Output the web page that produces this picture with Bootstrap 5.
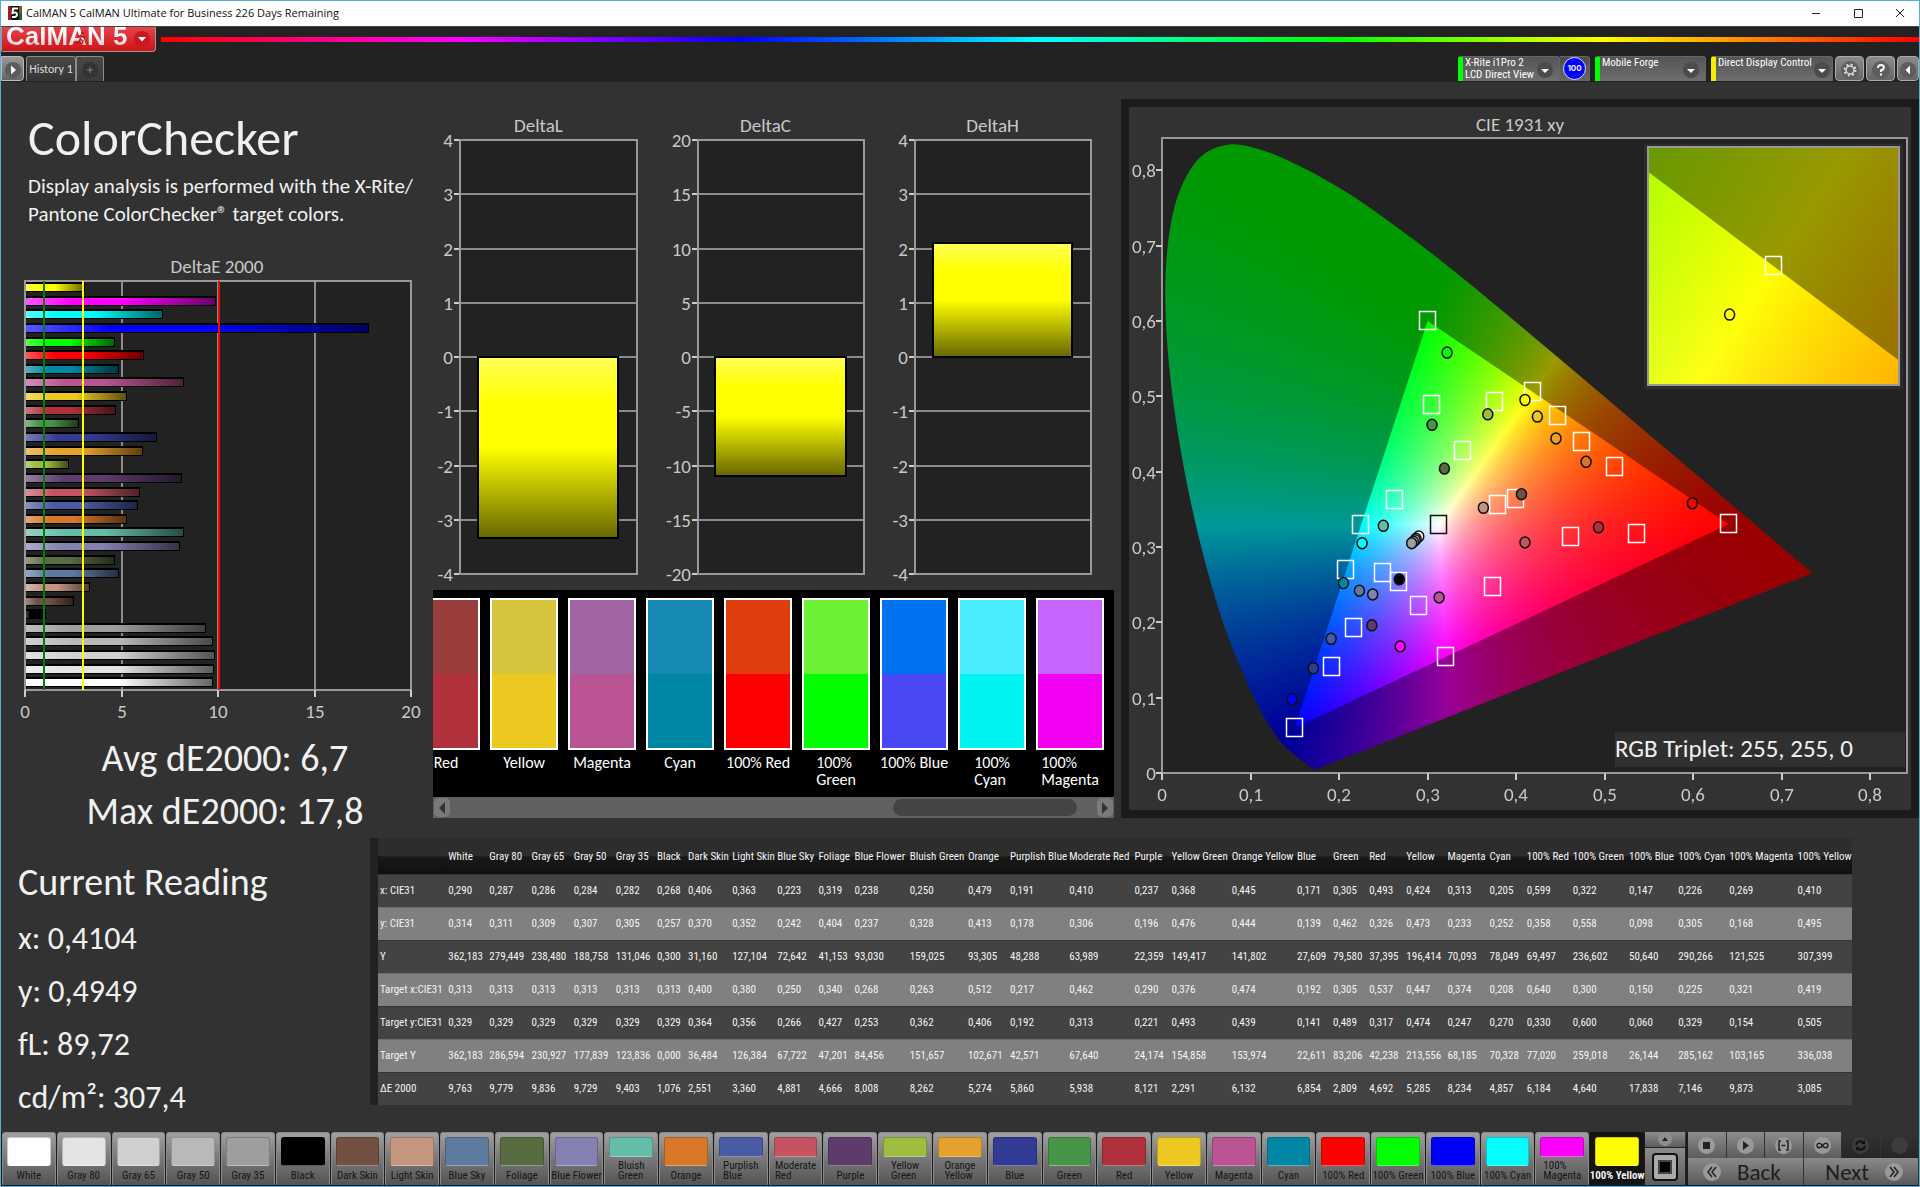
<!DOCTYPE html>
<html lang="en">
<head>
<meta charset="utf-8">
<meta name="viewport" content="width=device-width, initial-scale=1">
<title>CalMAN 5 CalMAN Ultimate for Business</title>
<link rel="stylesheet" href="https://cdn.jsdelivr.net/npm/bootstrap@5.3.0/dist/css/bootstrap.min.css">
<style>
  :root { --ui: Carlito, Calibri, "Open Sans", sans-serif; --tight: "Roboto Condensed", Roboto, sans-serif; }
  body { font-family: var(--ui); background: #323232; color: #f0f0f0; border: 1px solid #5aabdc; overflow-x: hidden; }
  button { font-family: inherit; }
  .titlebar { height: 25px; background: #fff; color: #111; font: 11px/22px "Open Sans", sans-serif; padding: 0 0 2px 7px; gap: 4px; }
  .titlebar .winbtn { width: 38px; height: 22px; border: 0; background: none; padding: 0; line-height: 0; }
  .shell { background: #222; height: 56px; border-top: 1px solid #444; }
  .logo-btn { width: 155px; height: 25px; border: 1px solid #999; border-top: 0; border-radius: 0 0 4px 2px; background: linear-gradient(#e8434a, #cf1218); padding: 0 4px 0 4px; overflow: hidden; position: relative; }
  .logo-btn span { font: bold 26px/18px "Liberation Sans", sans-serif; height: 22px; background: linear-gradient(#fff 30%, #c3c3c8); -webkit-background-clip: text; background-clip: text; color: transparent; }
  .logo-btn .runner { position: absolute; left: 73px; top: 4px; }
  .rainbow { height: 5px; margin: 0 0 1px 5px; background: linear-gradient(90deg, #f00, #f0f 17%, #00f 33%, #0ff 50%, #0f0 67%, #ff0 82%, #f00); }
  .tabrow { height: 25px; }
  .chip { border: 1px solid #8d8d8d; border-bottom: 0; border-radius: 3px 3px 0 0; background: linear-gradient(#5a5a5a, #3a3a3a); color: #ddd; height: 25px; padding: 0; }
  .play { width: 23px; border-radius: 0 4px 4px 0; border: 1px solid #bbb; background: linear-gradient(#999, #666); }
  .hist { width: 50px; font-size: 12px; margin-left: 2px; background: linear-gradient(#484848, #343434); }
  .plus { width: 28px; border-radius: 0 3px 0 0; background: linear-gradient(#484848, #3a3a3a); }
  .device { border-color: #666; background: linear-gradient(#555, #6e6e6e); border-left: 5px solid #0f0; font: 11px/12px var(--tight); color: #fff; text-align: left; padding: 0 6px 0 2px; white-space: nowrap; }
  .device.y { border-left-color: #f5ee00; padding-right: 2px; }
  .tool { width: 29px; border: 1px solid #aaa; border-radius: 4px; background: linear-gradient(#8b8b8b, #666); color: #fff; margin-right: 2px; }
  .w100 { width: 23px; height: 23px; border-radius: 50%; background: #00f; border: 1px solid #dde; font: bold 8px/21px Inter, sans-serif; text-align: center; }
  .meter { width: 30px; border: 1px solid #666; border-left: 0; border-radius: 0 3px 0 0; background: linear-gradient(#4c4c4c, #666); height: 25px; }
  .colA { width: 22%; padding-left: 2px; }
  .colB { width: 36.4%; }
  .deltas { padding: 32px 15px 0 2px; }
  .deltas svg { overflow: visible; }
  .intro { padding-left: 25px; }
  .intro h1 { font-size: 50px; line-height: 60px; margin: 26px 0 4px; }
  .intro p { font-size: 21px; line-height: 28px; margin: 0 0 27px; white-space: nowrap; }
  .fig-title { font-size: 19px; line-height: 24px; text-align: center; color: #c8c8c8; margin: 0; font-weight: 400; }
  .colA .fig-title { padding-left: 8px; }
  svg text { font-family: var(--ui); font-size: 19px; fill: #c8c8c8; }
  .stats { padding: 7px 0 0 24px; }
  .stat { font-size: 38px; line-height: 53px; text-align: center; margin: 0; }
  .strip { margin: 0 7px 0 10px; }
  .patches { background: #000; overflow: hidden; padding: 8px 10px 0 0; height: 207px; gap: 10px; }
  .patch { flex: 0 0 68px; }
  .patch .pair { height: 152px; border: 2px solid #fff; }
  .patch .pair div { height: 50%; }
  .patch p { font-size: 16px; line-height: 17px; margin: 4px -6px 0; color: #fff; }
  .hscroll { background: #606060; height: 21px; padding: 1px; }
  .hscroll button { width: 16px; height: 19px; border: 0; border-radius: 5px; background: #7a7a7a; padding: 0; line-height: 0; }
  .hscroll .thumb { width: 27%; margin-right: 3%; height: 17px; border-radius: 9px; background: #444; }
  .cie { background: #1b1b1b; padding: 8px; margin-top: 17px; }
  .cie-in { background: #323232; border-radius: 2px; height: 703px; position: relative; }
  .cie-in .fig-title { padding-top: 6px; }
  .cie-in svg, .cie-in canvas { position: absolute; left: 0; top: 0; }
  .triplet { position: absolute; right: 6px; bottom: 43px; width: 290px; height: 35px; background: #303030; font-size: 25px; line-height: 34px; }
  .reading { width: 369px; padding-left: 17px; }
  .reading h2 { font-size: 38px; line-height: 46px; margin: 21px 0 7px; }
  .reading p { font-size: 32px; line-height: 53px; margin: 0; }
  .grid-wrap { flex: 1 1 0; min-width: 0; margin-right: 67px; }
  .data { table-layout: fixed; width: 100%; font: 11px/32px var(--tight); color: #f4f4f4; border-left: 8px solid #222; }
  .data th, .data td { padding: 0 0 0 2px; white-space: nowrap; font-weight: 400; }
  .data thead th { height: 36px; padding-top: 3px; background: linear-gradient(#2d2d2d 50%, #191919 52%, #101010); }
  .data tbody tr { background: #434343; border-top: 1px solid #333; }
  .data tbody tr:nth-child(even) { background: #808080; border-color: #6e6e6e; }
  .dock { height: 54px; background: #1c1c1c; padding: 0 0 1px 1px; }
  .swatches { flex: 1 1 0; min-width: 0; gap: 1px; }
  .sw { flex: 1 1 0; min-width: 0; padding: 4px 4px 2px; border: 1px solid #8a8a8a; border-bottom-color: #555; border-radius: 3px 3px 0 0; background: linear-gradient(#a0a0a0, #7c7c7c 45%, #555); color: #161616; font: 11px/10px var(--tight); }
  .sw i { flex: 1 1 0; border-radius: 3px; width: 100%; border: 1px solid #0003; border-bottom-color: #fff5; }
  .sw span { white-space: nowrap; margin: 5px -6px 1px; text-align: left; }
  .sw span.two { margin-top: 4px; }
  .sw.on { background: #141414; border-color: #141414; color: #fff; font-weight: 600; }
  .mini { width: 41px; margin: 0 2px 0 1px; }
  .ctl { width: 231px; }
  .kbtn { border: 0; border-right: 1px solid #333; background: linear-gradient(#8c8c8c, #5c5c5c); color: #1d1d1d; padding: 0; line-height: 0; flex: 1 1 0; }
  .kbtn.off { background: linear-gradient(#333, #262626); }
  .nav2 { height: 27px; font-size: 23px; line-height: 24px; background: linear-gradient(#8a8a8a, #585858); padding: 0 15px; }
</style>
</head>
<body class="d-flex flex-column min-vh-100">

<div class="titlebar d-flex align-items-center">
  <svg width="14" height="14" viewBox="0 0 14 14" aria-hidden="true"><rect width="14" height="14" fill="#111"/><path d="M0 0h3v14H0z" fill="#a02020"/><path d="M11 0h3v7h-3z" fill="#7a5a20"/><path d="M11 7h3v7h-3z" fill="#206020"/><path d="M10 2.500H5L4.500 7q4.500-1.500 4.500 1.500T4 11" stroke="#fff" stroke-width="2" fill="none"/></svg>
  <span class="me-auto">CalMAN 5 CalMAN Ultimate for Business 226 Days Remaining</span>
  <button class="winbtn" aria-label="Minimize"><svg width="10" height="10"><path d="M1 5.500h8" stroke="#222"/></svg></button>
  <button class="winbtn" aria-label="Maximize"><svg width="10" height="10"><path d="M1.500 1.500h8v8h-8z" fill="none" stroke="#222"/></svg></button>
  <button class="winbtn" aria-label="Close"><svg width="10" height="10"><path d="M1 1l8 8M9 1l-8 8" stroke="#222"/></svg></button>
</div>

<header class="shell">
  <div class="d-flex align-items-start">
    <button class="logo-btn d-flex align-items-start justify-content-between" aria-label="CalMAN menu">
      <span>CalMAN 5</span>
      <svg class="runner" width="12" height="14" viewBox="0 0 12 14"><circle cx="7.500" cy="2" r="1.500" fill="#b01218"/><path d="M7 4L5 8l3 2-1 3M5 8l-1 3-3 1M3 6l3-2 2 2h2" stroke="#b01218" stroke-width="1.300" fill="none"/></svg>
      <svg class="mt-1" width="18" height="18"><circle cx="9" cy="8" r="8" fill="#c81820"/><path d="M5 6h8l-4 4.500z" fill="#fff"/></svg>
    </button>
    <div class="rainbow flex-grow-1 align-self-center"></div>
  </div>
  <div class="tabrow d-flex align-items-end mt-1">
    <button class="chip play" aria-label="Open panel"><svg width="18" height="18"><circle cx="9" cy="9" r="8" fill="#5c5c5c"/><path d="M7 4.500v9L12 9z" fill="#fff"/></svg></button>
    <button class="chip hist">History 1</button>
    <button class="chip plus" aria-label="Add tab"><svg width="18" height="18"><circle cx="9" cy="9" r="8" fill="#333"/><path d="M9 6v6M6 9h6" stroke="#888"/></svg></button>
    <div class="d-flex ms-auto">
      <button class="chip device d-flex justify-content-between" style="width:102px"><span>X-Rite i1Pro 2<br>LCD Direct View</span><svg class="mt-1 flex-shrink-0" width="16" height="18"><circle cx="8" cy="9" r="8" fill="#4b4b4b"/><path d="M4 8h8l-4 4z" fill="#fff"/></svg></button>
      <div class="meter d-flex align-items-center justify-content-center"><div class="w100">100</div></div>
      <button class="chip device d-flex justify-content-between" style="width:111px;margin-left:5px"><span>Mobile Forge</span><svg class="mt-1 flex-shrink-0" width="16" height="18"><circle cx="8" cy="9" r="8" fill="#4b4b4b"/><path d="M4 8h8l-4 4z" fill="#fff"/></svg></button>
      <button class="chip device y d-flex justify-content-between" style="width:122px;margin:0 2px 0 5px"><span>Direct Display Control</span><svg class="mt-1 flex-shrink-0" width="16" height="18"><circle cx="8" cy="9" r="8" fill="#4b4b4b"/><path d="M4 8h8l-4 4z" fill="#fff"/></svg></button>
      <button class="chip tool" aria-label="Settings"><svg width="18" height="18"><circle cx="9" cy="9" r="9" fill="#5e5e5e"/><circle cx="9" cy="9" r="4" fill="none" stroke="#ddd" stroke-width="1.500"/><circle cx="9" cy="9" r="5.500" fill="none" stroke="#ddd" stroke-width="2" stroke-dasharray="2 2.320"/></svg></button>
      <button class="chip tool" aria-label="Help"><svg width="18" height="18"><circle cx="9" cy="9" r="9" fill="#5e5e5e"/><path d="M6 7q0-3 3-3t3 2.500Q12 8 9 9.500V11M9 12.500v2" stroke="#fff" stroke-width="2" fill="none"/></svg></button>
      <button class="chip tool me-0" style="width:22px" aria-label="Collapse"><svg width="18" height="18"><circle cx="9" cy="9" r="8" fill="#5e5e5e"/><path d="M11 4.500v9L6.500 9z" fill="#fff"/></svg></button>
    </div>
  </div>
</header>

<main>
  <section class="d-flex">
    <div class="colA">
      <div class="intro">
        <h1>ColorChecker</h1>
        <p>Display analysis is performed with the X-Rite/<br>Pantone ColorChecker® target colors.</p>
      </div>
      <h3 class="fig-title">DeltaE 2000</h3>
      <svg id="de" class="d-block w-100" height="446" role="img" aria-label="DeltaE 2000 per patch"></svg>
      <div class="stats">
        <p class="stat">Avg dE2000: 6,7</p>
        <p class="stat">Max dE2000: 17,8</p>
      </div>
    </div>
    <div class="colB">
      <div class="deltas"><div class="row g-0">
        <div class="col-4"><h3 class="fig-title">DeltaL</h3><svg id="dl" class="d-block w-100" height="452"></svg></div>
        <div class="col-4"><h3 class="fig-title">DeltaC</h3><svg id="dc" class="d-block w-100" height="452"></svg></div>
        <div class="col-4"><h3 class="fig-title">DeltaH</h3><svg id="dh" class="d-block w-100" height="452"></svg></div>
      </div></div>
      <div class="strip">
        <div id="patches" class="patches d-flex justify-content-end"></div>
        <div class="hscroll d-flex align-items-center">
          <button class="me-auto" aria-label="Scroll left"><svg width="8" height="12"><path d="M7 0v12L1 6z" fill="#333"/></svg></button>
          <div class="thumb"></div>
          <button aria-label="Scroll right"><svg width="8" height="12"><path d="M1 0v12l6-6z" fill="#333"/></svg></button>
        </div>
      </div>
    </div>
    <div class="flex-grow-1">
      <div class="cie">
        <div class="cie-in" id="ciebox">
          <h3 class="fig-title">CIE 1931 xy</h3>
          <canvas id="ciec"></canvas>
          <svg id="cies"></svg>
          <div class="triplet">RGB Triplet: 255, 255, 0</div>
        </div>
      </div>
    </div>
  </section>

  <section class="d-flex" id="lower">
    <div class="reading">
      <h2>Current Reading</h2>
      <p>x: 0,4104</p>
      <p>y: 0,4949</p>
      <p>fL: 89,72</p>
      <p>cd/m²: 307,4</p>
    </div>
    <div class="grid-wrap"><table class="data" id="data"></table></div>
  </section>
</main>

<footer class="dock d-flex mt-auto">
  <div id="swatches" class="swatches d-flex"></div>
  <div class="mini d-flex flex-column">
    <button class="kbtn" aria-label="Up"><svg width="16" height="15"><circle cx="8" cy="7" r="7" fill="#8f8f8f"/><path d="M5 9h6L8 5z" fill="#222"/></svg></button>
    <button class="kbtn border-top border-dark" style="flex-grow:3" aria-label="Pattern window"><svg width="26" height="28"><rect x="1" y="1" width="24" height="26" rx="3" fill="#aaa" stroke="#111" stroke-width="2"/><rect x="7" y="8" width="12" height="12" fill="#000" stroke="#444" stroke-width="2"/></svg></button>
  </div>
  <div class="ctl d-flex flex-column">
    <div class="d-flex flex-grow-1 w-100" id="keys"></div>
    <div class="d-flex">
      <button class="kbtn nav2 d-flex align-items-center"><svg width="18" height="18" class="me-3"><circle cx="9" cy="9" r="9" fill="#999"/><path d="M9 4L5 9l4 5M13 4L9 9l4 5" stroke="#222" stroke-width="1.500" fill="none"/></svg>Back</button>
      <button class="kbtn nav2 d-flex align-items-center justify-content-end">Next<svg width="18" height="18" class="ms-3"><circle cx="9" cy="9" r="9" fill="#999"/><path d="M5 4l4 5-4 5M9 4l4 5-4 5" stroke="#222" stroke-width="1.500" fill="none"/></svg></button>
    </div>
  </div>
</footer>

<script src="https://cdn.jsdelivr.net/npm/bootstrap@5.3.0/dist/js/bootstrap.bundle.min.js"></script>
<script>
// name | colour | column width | x y Y | target x y Y | dE
const P = `White|#ffffff|41|0,290 0,314 362,183 0,313 0,329 362,183 9,763
Gray 80|#e4e4e4|42|0,287 0,311 279,449 0,313 0,329 286,594 9,779
Gray 65|#d0d0d0|42|0,286 0,309 238,480 0,313 0,329 230,927 9,836
Gray 50|#b9b9b9|42|0,284 0,307 188,758 0,313 0,329 177,839 9,729
Gray 35|#9e9e9e|41|0,282 0,305 131,046 0,313 0,329 123,836 9,403
Black|#000000|31|0,268 0,257 0,300 0,313 0,329 0,000 1,076
Dark Skin|#735142|44|0,406 0,370 31,160 0,400 0,364 36,484 2,551
Light Skin|#c4957f|45|0,363 0,352 127,104 0,380 0,356 126,384 3,360
Blue Sky|#5e7a9e|41|0,223 0,242 72,642 0,250 0,266 67,722 4,881
Foliage|#586c41|36|0,319 0,404 41,153 0,340 0,427 47,201 4,666
Blue Flower|#8480b1|55|0,238 0,237 93,030 0,268 0,253 84,456 8,008
Bluish Green|#63bda8|58|0,250 0,328 159,025 0,263 0,362 151,657 8,262
Orange|#d87728|42|0,479 0,413 93,305 0,512 0,406 102,671 5,274
Purplish Blue|#495ba5|59|0,191 0,178 48,288 0,217 0,192 42,571 5,860
Moderate Red|#c45461|65|0,410 0,306 63,989 0,462 0,313 67,640 5,938
Purple|#5d3c6b|37|0,237 0,196 22,359 0,290 0,221 24,174 8,121
Yellow Green|#9ebc3f|60|0,368 0,476 149,417 0,376 0,493 154,858 2,291
Orange Yellow|#e5a12d|65|0,445 0,444 141,802 0,474 0,439 153,974 6,132
Blue|#323b93|36|0,171 0,139 27,609 0,192 0,141 22,611 6,854
Green|#479549|36|0,305 0,462 79,580 0,305 0,489 83,206 2,809
Red|#b0313b|37|0,493 0,326 37,395 0,537 0,317 42,238 4,692
Yellow|#edc821|41|0,424 0,473 196,414 0,447 0,474 213,556 5,285
Magenta|#bb5492|42|0,313 0,233 70,093 0,374 0,247 68,185 8,234
Cyan|#0087a6|37|0,205 0,252 78,049 0,208 0,270 70,328 4,857
100% Red|#ff0000|46|0,599 0,358 69,497 0,640 0,330 77,020 6,184
100% Green|#00ff00|56|0,322 0,558 236,602 0,300 0,600 259,018 4,640
100% Blue|#0000ff|49|0,147 0,098 50,640 0,150 0,060 26,144 17,838
100% Cyan|#00ffff|51|0,226 0,305 290,266 0,225 0,329 285,162 7,146
100% Magenta|#ff00ff|68|0,269 0,168 121,525 0,321 0,154 103,165 9,873
100% Yellow|#ffff00|56|0,410 0,495 307,399 0,419 0,505 336,038 3,085`.split('\n').map(l => {
  const [name, color, w, v] = l.split('|');
  const s = v.split(' ');
  return { name, color, w: +w, s, n: s.map(t => parseFloat(t.replace(',', '.'))) };
});
const $ = id => document.getElementById(id);
const com = v => String(v).replace('.', ',');

// data table
const rows = ['x: CIE31', 'y: CIE31', 'Y', 'Target x:CIE31', 'Target y:CIE31', 'Target Y', 'ΔE 2000'];
const total = 72 + P.reduce((a, p) => a + p.w, 0);
$('data').innerHTML = '<colgroup>' + [72, ...P.map(p => p.w)].map(w => `<col style="width:${w / total * 100}%">`).join('') + '</colgroup><thead><tr><th aria-label="Quantity"></th>' +
  P.map(p => `<th scope="col">${p.name}</th>`).join('') + '</tr></thead><tbody>' +
  rows.map((r, i) => `<tr><th scope="row">${r}</th>${P.map(p => `<td>${p.s[i]}</td>`).join('')}</tr>`).join('') + '</tbody>';

// bottom swatches
const split = ['Bluish Green', 'Purplish Blue', 'Moderate Red', 'Yellow Green', 'Orange Yellow', '100% Magenta'];
$('swatches').innerHTML = P.map((p, i) => {
  const two = split.includes(p.name);
  return `<button class="sw d-flex flex-column align-items-center${i === 29 ? ' on' : ''}"><i style="background:${p.color}"></i><span${two ? ' class="two"' : ''}>${two ? p.name.replace(' ', '<br>') : p.name}</span></button>`;
}).join('');

// patch comparison: measured over target
$('patches').innerHTML = [['Red', '#983c3c', '#b0313b'], ['Yellow', '#d6c43c', '#edc821'], ['Magenta', '#a165a5', '#bb5492'], ['Cyan', '#178ab6', '#0087a6'], ['100% Red', '#de3e0b', '#ff0000'], ['100%<br>Green', '#6cf234', '#00ff00'], ['100% Blue', '#0072f0', '#4a47f5'], ['100%<br>Cyan', '#4becff', '#00f2f2'], ['100%<br>Magenta', '#c864ff', '#f200f2']]
  .map(([n, a, b]) => `<div class="patch"><div class="pair"><div style="background:${a}"></div><div style="background:${b}"></div></div><p class="d-flex justify-content-center"><span>${n}</span></p></div>`).join('');

// transport keys
$('keys').innerHTML = [['Stop', '<path d="M6 6h7v7H6z" fill="#222"/>'], ['Play', '<path d="M7 5v9l6-4.500z" fill="#222"/>'], ['Range', '<path d="M7 5H5v9h2M12 5h2v9h-2M7.500 9.500h4" stroke="#222" stroke-width="1.500" fill="none"/>'], ['Loop', '<path d="M9.500 9.500C7 6 4 7 4 9.500s3 3.500 5.500 0 5.500-2.500 5.500 0-3 3.500-5.500 0z" stroke="#222" stroke-width="1.500" fill="none"/>'], ['Refresh', '<path d="M5 9a4.500 4.500 0 0 1 8-2M14 10a4.500 4.500 0 0 1-8 2" stroke="#111" stroke-width="2" fill="none"/><path d="M14 4v4h-4zM5 15v-4h4z" fill="#111"/>'], ['Blank', '']]
  .map(([n, g], i) => `<button class="kbtn${i > 3 ? ' off' : ''}" aria-label="${n}"><svg width="19" height="19"><circle cx="9.500" cy="9.500" r="8.500" fill="${i > 3 ? '#3c3c3c' : '#999'}"/>${g}</svg></button>`).join('');

const mix = (c, t, k) => '#' + [1, 3, 5].map(i => Math.round(parseInt(c.substr(i, 2), 16) * (1 - k) + t * k).toString(16).padStart(2, '0')).join('');
const grad = (id, c, vert) => `<linearGradient id="${id}" ${vert ? 'x2="0" y2="1"' : ''}><stop stop-color="${mix(c, 255, .35)}"/><stop offset=".25" stop-color="${c}"/><stop offset=".5" stop-color="${c}"/><stop offset="1" stop-color="${mix(c, 0, .6)}"/></linearGradient>`;
const line = (x1, y1, x2, y2, c = '#8c8c8c', w = 2) => `<path d="M${x1} ${y1}L${x2} ${y2}" stroke="${c}" stroke-width="${w}"/>`;
const text = (x, y, t, a) => `<text x="${x}" y="${y}" text-anchor="${a}">${t}</text>`;

function drawDE() {
  const el = $('de'), W = el.clientWidth, L = 22, R = W - 12, T = 2, B = 411, X = v => Math.round(L + (R - L) * v / 20);
  let s = '<defs>' + P.map((p, i) => grad('g' + i, p.color)).join('') + `</defs><rect x="${L}" y="${T}" width="${R - L}" height="${B - T}" fill="#222"/>`;
  [5, 10, 15].forEach(v => s += line(X(v), T, X(v), B));
  const h = (B - T) / 30;
  P.forEach((p, i) => {
    const y = Math.round(T + (29 - i) * h) + 1;
    s += `<rect x="${L}" y="${y}" width="${X(p.n[6]) - L}" height="10" fill="#000"/><rect x="${L}" y="${y + 2}" width="${X(p.n[6]) - L - 1}" height="7" fill="url(#g${i})"/>`;
  });
  s += `<path d="M${L} ${T}H${R}V${B}H${L}z" fill="none" stroke="#999" stroke-width="2"/>`;
  s += line(X(1), T, X(1), B, '#0a7a0a') + line(X(3), T, X(3), B, '#ff0') + line(X(10) + 1, T, X(10) + 1, B, '#f00');
  [0, 5, 10, 15, 20].forEach(v => s += line(X(v), B, X(v), B + 7, '#ccc') + text(X(v), B + 28, v, 'middle'));
  el.innerHTML = s;
}
function drawDelta(id, max, val, left) {
  const el = $(id), W = el.clientWidth, L = left, R = W - 15, T = 2, B = 436, Y = v => Math.round((T + B) / 2 - (B - T) / 2 * v / max);
  let s = '<defs>' + grad('v' + id, '#ffff00', true) + `</defs><rect x="${L}" y="${T}" width="${R - L}" height="${B - T}" fill="#222"/>`;
  for (let k = -4; k <= 4; k++) {
    const v = k * max / 4;
    s += line(L, Y(v), R, Y(v)) + line(L - 6, Y(v), L, Y(v), '#ccc') + text(L - 7, Y(v) + 7, v, 'end');
  }
  s += `<path d="M${L} ${T}H${R}V${B}H${L}z" fill="none" stroke="#999" stroke-width="2"/>`;
  const a = Y(Math.max(0, val)), b = Y(Math.min(0, val)), bx = L + (R - L) * .1, bw = (R - L) * .79;
  s += `<rect x="${Math.round(bx)}" y="${a}" width="${Math.round(bw)}" height="${b - a}" fill="url(#v${id})" stroke="#000" stroke-width="2"/>`;
  el.innerHTML = s;
}

// CIE 1931 spectral locus
const locus = [[.1741,.005],[.1714,.0051],[.1689,.0069],[.1644,.0109],[.1566,.0177],[.144,.0297],[.1355,.0399],[.1241,.0578],[.1096,.0868],[.0913,.1327],[.0687,.2007],[.0454,.295],[.0235,.4127],[.0082,.5384],[.0039,.6548],[.0139,.7502],[.0389,.812],[.0743,.8338],[.1142,.8262],[.1547,.8059],[.1929,.7816],[.2296,.7543],[.3016,.6923],[.3731,.6245],[.4441,.5547],[.5125,.4866],[.5752,.4242],[.627,.3725],[.6658,.334],[.6915,.3083],[.719,.2809],[.7347,.2653]];
const gamut = [[.64, .33], [.3, .6], [.15, .06]];
function shade(w, h, toXY, k) {
  const c = document.createElement('canvas'); c.width = w; c.height = h;
  const g = c.getContext('2d'), d = g.createImageData(w, h);
  for (let j = 0, o = 0; j < h; j++) for (let i = 0; i < w; i++, o += 4) {
    const [x, y0] = toXY(i, j), y = Math.max(y0, .0001), X = x / y, Z = (1 - x - y) / y;
    const r = Math.max(0, 3.2406 * X - 1.5372 - .4986 * Z), gg = Math.max(0, -.9689 * X + 1.8758 + .0415 * Z), b = Math.max(0, .0557 * X - .204 + 1.057 * Z);
    const m = 255 * k / Math.max(r, gg, b, .0001);
    d.data[o] = r * m; d.data[o + 1] = gg * m; d.data[o + 2] = b * m; d.data[o + 3] = 255;
  }
  g.putImageData(d, 0, 0);
  return c;
}
function poly(g, pts) { g.beginPath(); pts.forEach((p, i) => i ? g.lineTo(...p) : g.moveTo(...p)); g.closePath(); }
function drawCIE() {
  const box = $('ciebox'), W = box.clientWidth, H = box.clientHeight, L = 33, R = W - 4, T = 31, B = H - 37;
  const X = v => L + (R - L) * v / .8415, Y = v => B - (B - T) * v / .8427;
  const cv = $('ciec'); cv.width = W; cv.height = H;
  const g = cv.getContext('2d'), w = R - L, h = B - T;
  g.fillStyle = '#222'; g.fillRect(L, T, w, h);
  const toXY = (i, j) => [(i + .5) / w * .8415, (1 - (j + .5) / h) * .8427];
  g.save();
  g.beginPath();
  const q = locus.map(p => [X(p[0]), Y(p[1])]), n = q.length;
  g.moveTo(...q[0]);
  for (let i = 0; i < n - 1; i++) {
    const a = q[Math.max(0, i - 1)], b = q[i], c = q[i + 1], d = q[Math.min(n - 1, i + 2)];
    g.bezierCurveTo(b[0] + (c[0] - a[0]) / 6, b[1] + (c[1] - a[1]) / 6, c[0] - (d[0] - b[0]) / 6, c[1] - (d[1] - b[1]) / 6, c[0], c[1]);
  }
  g.closePath(); g.clip();
  g.drawImage(shade(w, h, toXY, .6), L, T);
  g.restore(); g.save();
  poly(g, gamut.map(p => [X(p[0]), Y(p[1])])); g.clip();
  g.drawImage(shade(w, h, toXY, 1), L, T);
  g.restore();
  // zoomed inset around the current target
  const iw = 251, ih = 238, ix = R - 8 - iw, iy = T + 9, tx = .4193, ty = .5053;
  const iXY = (i, j) => [tx + (i - iw / 2) / 4930, ty - (j - ih / 2) / 4670];
  const toI = (x, y) => [ix + iw / 2 + (x - tx) * 4930, iy + ih / 2 - (y - ty) * 4670];
  g.fillStyle = '#2c2c2c'; g.fillRect(ix - 4, iy - 3, iw + 8, ih + 7);
  g.drawImage(shade(iw, ih, iXY, .6), ix, iy);
  g.save(); g.beginPath(); g.rect(ix, iy, iw, ih); g.clip();
  poly(g, gamut.map(p => toI(...p))); g.clip();
  g.drawImage(shade(iw, ih, iXY, 1), ix, iy); g.restore();

  const s = $('cies'); s.setAttribute('width', W); s.setAttribute('height', H);
  let o = `<path d="M${L} ${T}H${R}V${B}H${L}z" fill="none" stroke="#999" stroke-width="2"/><rect x="${ix}" y="${iy}" width="${iw}" height="${ih}" fill="none" stroke="#999" stroke-width="2"/>`;
  for (let k = 0; k <= 8; k++) {
    const t = k ? com(k / 10) : '0', x = Math.round(X(k / 10)), y = Math.round(Y(k / 10));
    o += line(x, B, x, B + 7, '#ccc') + text(x, B + 28, t, 'middle') + line(L - 6, y, L, y, '#ccc') + text(L - 6, y + 7, t, 'end');
  }
  const sq = (x, y, c = '#fff') => `<rect x="${Math.round(x) - 8.5}" y="${Math.round(y) - 9.5}" width="16" height="18" fill="none" stroke="${c}" stroke-width="1.500"/>`;
  const ci = (x, y, c) => `<ellipse cx="${x}" cy="${y}" rx="5" ry="5.500" fill="${c}" stroke="#111" stroke-width="1.500"/>`;
  P.slice(6).forEach(p => o += sq(X(p.n[3]), Y(p.n[4])));
  o += sq(X(.313), Y(.329), '#111');
  P.forEach(p => o += ci(X(p.n[0]), Y(p.n[1]), p.color));
  const a = toI(tx, ty), b = toI(.4104, .4949);
  o += sq(...a) + ci(...b, '#ffff00');
  s.innerHTML = o;
}
function draw() { drawDE(); drawDelta('dl', 4, -3.33, 35); drawDelta('dc', 20, -10.98, 46); drawDelta('dh', 4, 2.11, 36); drawCIE(); }
draw();
addEventListener('resize', draw);
</script>
</body>
</html>
